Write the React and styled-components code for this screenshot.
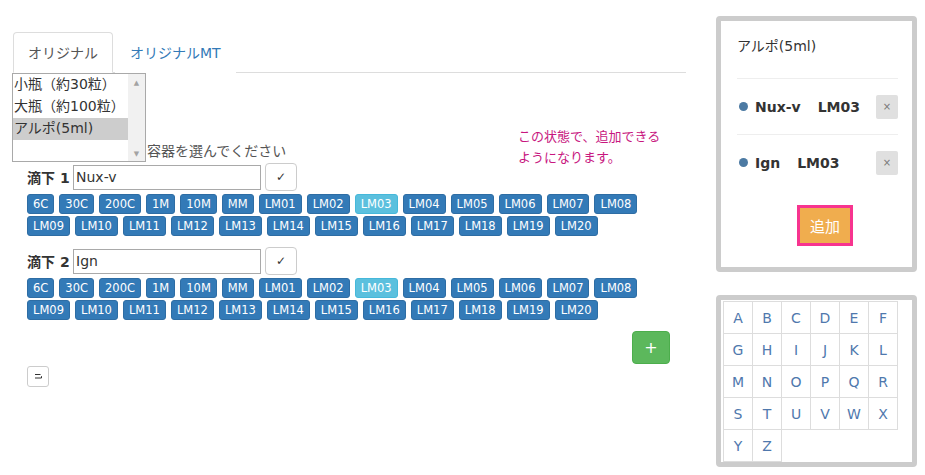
import React from "react";
import styled, { createGlobalStyle } from "styled-components";

const potencies = [
  "6C", "30C", "200C", "1M", "10M", "MM",
  "LM01", "LM02", "LM03", "LM04", "LM05", "LM06", "LM07", "LM08",
  "LM09", "LM10", "LM11", "LM12", "LM13", "LM14", "LM15", "LM16",
  "LM17", "LM18", "LM19", "LM20",
];

const drops = [
  { no: 1, remedy: "Nux-v", potency: "LM03" },
  { no: 2, remedy: "Ign", potency: "LM03" },
];

const containers = ["小瓶（約30粒）", "大瓶（約100粒）", "アルポ(5ml)"];

const letterRows = [
  ["A", "B", "C", "D", "E", "F"],
  ["G", "H", "I", "J", "K", "L"],
  ["M", "N", "O", "P", "Q", "R"],
  ["S", "T", "U", "V", "W", "X"],
  ["Y", "Z"],
];

function App() {
  return (
    <>
      <GlobalStyle />
      <Page>
        <LeftColumn>
          <Tabs>
            <Tab $active>オリジナル</Tab>
            <Tab>オリジナルMT</Tab>
          </Tabs>

          <SelectRow>
            <Listbox>
              <Options>
                {containers.map((c, i) => (
                  <Option key={c} $selected={i === 2}>
                    {c}
                  </Option>
                ))}
              </Options>
              <Scrollbar>
                <Arrow>▲</Arrow>
                <Arrow>▼</Arrow>
              </Scrollbar>
            </Listbox>
            <Caption>容器を選んでください</Caption>
          </SelectRow>

          <Note>
            この状態で、追加できる
            <br />
            ようになります。
          </Note>

          {drops.map((d) => (
            <DropBlock key={d.no}>
              <DropHead>
                <DropLabel>滴下 {d.no}</DropLabel>
                <RemedyInput defaultValue={d.remedy} />
                <CheckButton>✓</CheckButton>
              </DropHead>
              <PotencyList>
                {potencies.map((p) => (
                  <Potency key={p} $active={p === d.potency}>
                    {p}
                  </Potency>
                ))}
              </PotencyList>
            </DropBlock>
          ))}

          <AddRow>
            <PlusButton>+</PlusButton>
          </AddRow>
          <ReturnButton>
            <svg width="9" height="7" viewBox="0 0 9 7">
              <path
                d="M1 1.5 H6.5 M1 5 H7.5 V3.2"
                fill="none"
                stroke="#333"
                strokeWidth="1"
              />
            </svg>
          </ReturnButton>
        </LeftColumn>

        <RightColumn>
          <CartPanel>
            <CartTitle>アルポ(5ml)</CartTitle>
            {drops.map((d, i) => (
              <CartItem key={d.no} $last={i === drops.length - 1}>
                <Bullet />
                <CartName>{d.remedy}</CartName>
                <CartPotency>{d.potency}</CartPotency>
                <RemoveButton>×</RemoveButton>
              </CartItem>
            ))}
            <AddArea>
              <AddButton>追加</AddButton>
            </AddArea>
          </CartPanel>

          <LetterPanel>
            <LetterTable>
              <tbody>
                {letterRows.map((row, i) => (
                  <tr key={i}>
                    {row.map((l) => (
                      <LetterCell key={l}>{l}</LetterCell>
                    ))}
                  </tr>
                ))}
              </tbody>
            </LetterTable>
          </LetterPanel>
        </RightColumn>
      </Page>
    </>
  );
}

export default App;

const GlobalStyle = createGlobalStyle`
  body {
    margin: 0;
    background: #fff;
    color: #333;
    font-family: "DejaVu Sans", "Noto Sans CJK JP", sans-serif;
    font-size: 14px;
  }
  * {
    box-sizing: border-box;
  }
`;

const Page = styled.div`
  display: flex;
  gap: 30px;
  padding: 16px 0 0 12px;
  width: 925px;
`;

const LeftColumn = styled.div`
  position: relative;
  width: 674px;
  margin-top: 16px;
`;

const Tabs = styled.div`
  display: flex;
  margin-left: 1px;
  border-bottom: 1px solid #ddd;
`;

const Tab = styled.div`
  margin-right: 2px;
  margin-bottom: -1px;
  padding: 10px 14px 9px;
  line-height: 20px;
  border: 1px solid ${(p) => (p.$active ? "#ddd" : "transparent")};
  border-bottom-color: ${(p) => (p.$active ? "#fff" : "transparent")};
  border-radius: 4px 4px 0 0;
  background: #fff;
  color: ${(p) => (p.$active ? "#555" : "#337ab7")};
`;

const SelectRow = styled.div`
  display: flex;
  align-items: flex-end;
`;

const Listbox = styled.div`
  display: flex;
  width: 134px;
  height: 89px;
  border: 1px solid #a9a9a9;
  background: #fff;
`;

const Options = styled.div`
  flex: 1;
`;

const Option = styled.div`
  height: 22px;
  line-height: 20px;
  padding-left: 1px;
  white-space: nowrap;
  overflow: hidden;
  background: ${(p) => (p.$selected ? "#cdcdcd" : "transparent")};
  color: #333;
`;

const Scrollbar = styled.div`
  width: 17px;
  display: flex;
  flex-direction: column;
  justify-content: space-between;
  align-items: center;
  background: #f1f1f1;
  padding: 4px 0 2px;
`;

const Arrow = styled.span`
  font-size: 7px;
  line-height: 10px;
  color: #a3a3a3;
`;

const Caption = styled.span`
  margin-left: 1px;
  line-height: 20px;
  margin-bottom: 1px;
  color: #555;
`;

const Note = styled.div`
  position: absolute;
  left: 506px;
  top: 94px;
  font-size: 13px;
  line-height: 21px;
  color: #c8177f;
`;

const DropBlock = styled.div`
  padding-left: 15px;
  margin-top: 1px;
  & + & {
    margin-top: 11px;
  }
`;

const DropHead = styled.div`
  display: flex;
  align-items: center;
  height: 28px;
`;

const DropLabel = styled.span`
  font-weight: bold;
  width: 46px;
  white-space: nowrap;
`;

const RemedyInput = styled.input`
  width: 188px;
  height: 25px;
  padding: 0 2px;
  border: 1px solid #a9a9a9;
  font-family: "DejaVu Sans", sans-serif;
  font-size: 14px;
  color: #333;
  outline: none;
`;

const CheckButton = styled.button`
  width: 32px;
  height: 28px;
  margin-left: 4px;
  padding: 0;
  border: 1px solid #ccc;
  border-radius: 4px;
  background: #fff;
  color: #333;
  font-family: "DejaVu Sans", sans-serif;
  font-size: 12px;
`;

const PotencyList = styled.div`
  display: flex;
  flex-wrap: wrap;
  column-gap: 5px;
  row-gap: 2px;
  width: 640px;
  margin-top: 3px;
`;

const Potency = styled.button`
  height: 20px;
  padding: 0 5px;
  border: 1px solid ${(p) => (p.$active ? "#46b8da" : "#2e6da4")};
  border-radius: 3px;
  background: ${(p) => (p.$active ? "#5bc0de" : "#337ab7")};
  color: #fff;
  font-family: "DejaVu Sans", sans-serif;
  font-size: 11.5px;
  line-height: 18px;
`;

const AddRow = styled.div`
  display: flex;
  justify-content: flex-end;
  padding-right: 16px;
  margin-top: 11px;
`;

const PlusButton = styled.button`
  width: 38px;
  height: 33px;
  padding: 0;
  border: 1px solid #4cae4c;
  border-radius: 4px;
  background: #5cb85c;
  color: #fff;
  font-family: "DejaVu Sans", sans-serif;
  font-size: 16px;
`;

const ReturnButton = styled.button`
  display: flex;
  align-items: center;
  justify-content: center;
  width: 22px;
  height: 21px;
  margin: 2px 0 0 15px;
  padding: 0;
  border: 1px solid #ccc;
  border-radius: 3px;
  background: #fff;
`;

const RightColumn = styled.div`
  display: flex;
  flex-direction: column;
  gap: 23px;
  width: 201px;
`;

const CartPanel = styled.div`
  border: 5px solid #ccc;
  border-radius: 4px;
  padding: 15px 14px 21px 16px;
  background: #fff;
`;

const CartTitle = styled.div`
  line-height: 20px;
  padding-bottom: 22px;
  border-bottom: 1px solid #eee;
  color: #333;
`;

const CartItem = styled.div`
  display: flex;
  align-items: center;
  height: ${(p) => (p.$last ? "55px" : "56px")};
  border-bottom: ${(p) => (p.$last ? "none" : "1px solid #eee")};
`;

const Bullet = styled.span`
  width: 9px;
  height: 9px;
  margin: 0 7px 0 2px;
  border-radius: 50%;
  background: #4c7aa3;
`;

const CartName = styled.span`
  font-weight: bold;
  margin-right: 17px;
`;

const CartPotency = styled.span`
  font-weight: bold;
`;

const RemoveButton = styled.button`
  margin-left: auto;
  width: 22px;
  height: 24px;
  padding: 0;
  border: none;
  border-radius: 2px;
  background: #e0e0e0;
  color: #777;
  font-family: "DejaVu Sans", sans-serif;
  font-size: 10px;
`;

const AddArea = styled.div`
  display: flex;
  justify-content: center;
  padding-left: 15px;
  margin-top: 15px;
`;

const AddButton = styled.button`
  width: 56px;
  height: 41px;
  padding: 0;
  border: 3px solid #f7348f;
  background: #f0ad4e;
  color: #fff;
  font-family: "Noto Sans CJK JP", sans-serif;
  font-size: 15px;
`;

const LetterPanel = styled.div`
  height: 172px;
  border: 5px solid #ccc;
  border-radius: 4px;
  padding: 1px 0 0 2px;
  background: #fff;
`;

const LetterTable = styled.table`
  border-collapse: collapse;
`;

const LetterCell = styled.td`
  width: 29px;
  height: 32px;
  padding: 0;
  border: 1px solid #ddd;
  text-align: center;
  vertical-align: middle;
  color: #4f78ad;
  font-size: 14px;
`;
